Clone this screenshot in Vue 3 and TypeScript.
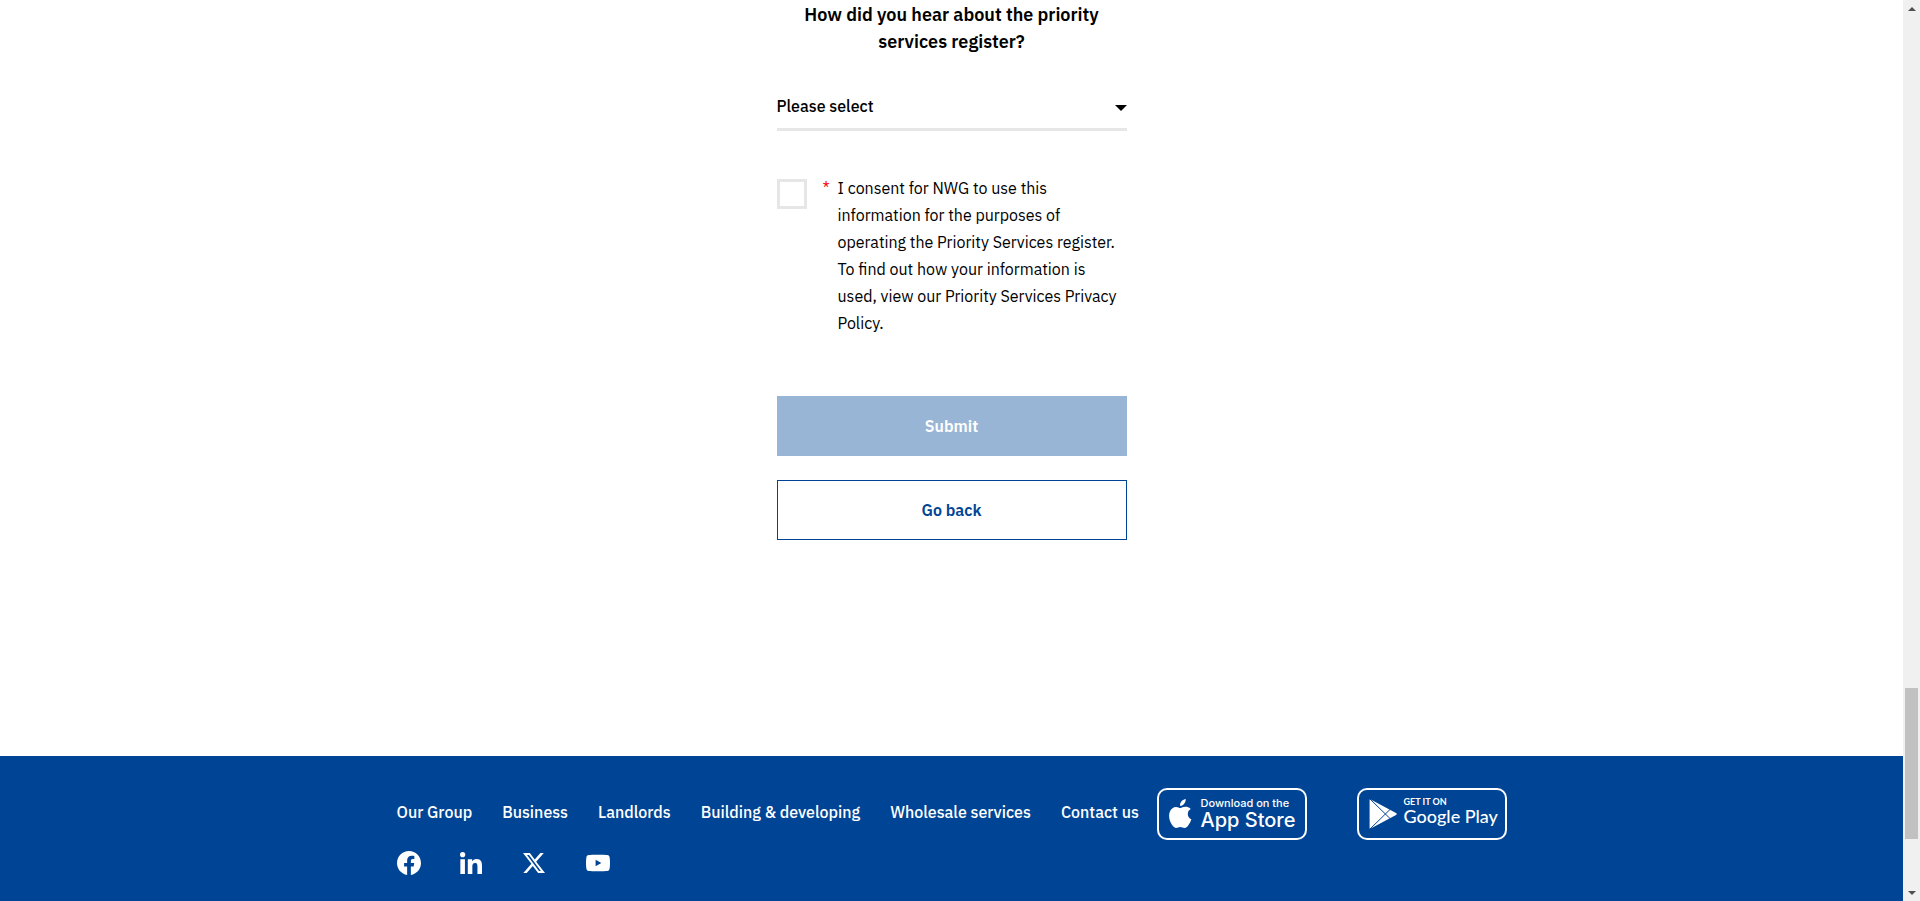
<script setup lang="ts">
import { ref } from 'vue'

interface SocialLink {
  name: string
  width: number
  height: number
  viewBox: string
  path: string
}

const source = ref<string>('')
const consent = ref<boolean>(false)

const sources: string[] = ['Website', 'Leaflet', 'Friend or family', 'Other']

const links: string[] = [
  'Our Group',
  'Business',
  'Landlords',
  'Building & developing',
  'Wholesale services',
  'Contact us',
]

const socials: SocialLink[] = [
  {
    name: 'Facebook',
    width: 24,
    height: 24,
    viewBox: '0 0 24 24',
    path: 'M24 12.07C24 5.4 18.63 0 12 0S0 5.4 0 12.07c0 6.03 4.39 11.02 10.13 11.93v-8.44H7.08v-3.49h3.05V9.41c0-3.02 1.79-4.69 4.53-4.69 1.31 0 2.68.24 2.68.24v2.97h-1.51c-1.49 0-1.96.93-1.96 1.89v2.25h3.33l-.53 3.49h-2.8V24C19.61 23.09 24 18.1 24 12.07z',
  },
  {
    name: 'LinkedIn',
    width: 22,
    height: 22,
    viewBox: '0 0 448 448',
    path: 'M100.28 448H7.4V148.9h92.88zM53.79 108.1C24.09 108.1 0 83.5 0 53.8a53.79 53.79 0 0 1 107.58 0c0 29.7-24.1 54.3-53.79 54.3zM447.9 448h-92.68V302.4c0-34.7-.7-79.2-48.29-79.2-48.29 0-55.69 37.7-55.69 76.7V448h-92.78V148.9h89.08v40.8h1.3c12.4-23.5 42.69-48.3 87.88-48.3 94 0 111.28 61.9 111.28 142.3V448z',
  },
  {
    name: 'X',
    width: 22,
    height: 20,
    viewBox: '0 0 22 20',
    path: 'M0 0h6.9l4.8 6.400L17.400 0h3.400l-7.600 8.700L22 20h-6.900l-5.300-6.900L3.700 20H.3l8.100-9.300zM4 1.900l12 16.200h1.900L6 1.900z',
  },
  {
    name: 'YouTube',
    width: 26,
    height: 18,
    viewBox: '0 0 26 18',
    path: 'M13 0C8 0 4.5.1 3 .3 1.400.6.6 1.500.4 3 .1 4.500 0 6.500 0 9s.1 4.500.4 6c.2 1.500 1 2.400 2.600 2.700 1.500.2 5 .3 10 .3s8.500-.1 10-.3c1.600-.3 2.400-1.200 2.600-2.700.3-1.500.4-3.500.4-6s-.1-4.500-.4-6C25.400 1.500 24.600.6 23 .3 21.500.1 18 0 13 0zM10.400 5.500 16.600 9l-6.200 3.500z',
  },
]
</script>

<template>
  <div class="window">
    <div class="page">
      <main class="content">
        <form class="form" @submit.prevent>
          <label class="question" for="source">How did you hear about the priority services register?</label>
          <div class="select-box">
            <select id="source" v-model="source" class="select">
              <option value="">Please select</option>
              <option v-for="item in sources" :key="item" :value="item">{{ item }}</option>
            </select>
          </div>
          <div class="consent">
            <input id="consent" v-model="consent" class="checkbox" type="checkbox" />
            <label class="consent-label" for="consent">
              <span class="required">*</span>
              <span>I consent for NWG to use this information for the purposes of operating the Priority Services register. To find out how your information is used, view our Priority Services Privacy Policy.</span>
            </label>
          </div>
          <button class="button primary" type="submit" :disabled="!consent">Submit</button>
          <button class="button secondary" type="button">Go back</button>
        </form>
      </main>

      <footer class="footer">
        <div class="footer-inner">
          <div class="footer-nav">
            <nav class="links">
              <a v-for="link in links" :key="link" class="link" href="#">{{ link }}</a>
            </nav>
            <div class="socials">
              <a v-for="item in socials" :key="item.name" class="social" href="#" :aria-label="item.name">
                <svg :width="item.width" :height="item.height" :viewBox="item.viewBox">
                  <path :d="item.path" fill="#fff" fill-rule="evenodd" />
                </svg>
              </a>
            </div>
          </div>
          <div class="badges">
            <a class="badge" href="#" aria-label="Download on the App Store">
              <svg class="apple" width="24" height="30" viewBox="0 0 24 30">
                <path fill="#fff" d="M16.700 0c.2 2-.6 3.700-1.700 4.900-1.100 1.300-2.600 2-4 1.900-.2-1.800.7-3.500 1.700-4.700C13.800.9 15.500.1 16.700 0zM21.700 10c-1.900 1.200-2.900 2.800-2.900 4.900 0 2.500 1.400 4.400 3.600 5.300-.6 1.900-1.600 3.900-2.900 5.700-1.100 1.600-2.200 3-4 3-1.700 0-2.300-1-4.200-1s-2.600 1-4.200 1c-1.800.1-3.100-1.600-4.300-3.300C.4 22.200-.9 16.500 1 12.300c1.200-2.700 3.500-4.400 6-4.400 1.900 0 3.300 1.100 4.500 1.100 1.100 0 2.900-1.300 5.200-1.200 1 0 3.500.3 5 2.200z" />
              </svg>
              <span class="badge-text apple-text">
                <span class="small">Download on the</span>
                <span class="large">App Store</span>
              </span>
            </a>
            <a class="badge" href="#" aria-label="Get it on Google Play">
              <svg class="play" width="28" height="30" viewBox="0 0 28 30">
                <path fill="#fff" d="M.6.500Q1.300.100 2.200.700L27 14Q28.500 15 27 16L2.200 29.300Q1.300 29.900.6 29.500z" />
                <path fill="none" stroke="#004595" stroke-width="1" d="M1 0 21 19.500M1 30 21 10.500" />
              </svg>
              <span class="badge-text google-text">
                <span class="small">GET IT ON</span>
                <span class="large">Google Play</span>
              </span>
            </a>
          </div>
        </div>
      </footer>
    </div>

    <div class="scrollbar" aria-hidden="true">
      <span class="arrow up"></span>
      <span class="thumb"></span>
      <span class="arrow down"></span>
    </div>
  </div>
</template>

<style>
body {
  margin: 0;
  background: #fff;
}
</style>

<style scoped>
.window {
  display: flex;
  min-height: 100vh;
  font-family: 'IBM Plex Sans', Roboto, sans-serif;
  font-size: 16px;
  line-height: 27px;
  color: #000;
}

.page {
  display: flex;
  flex: 1;
  flex-direction: column;
  min-width: 0;
}

.content {
  flex: 1;
  padding: 0 16px 216px;
}

.form {
  display: flex;
  flex-direction: column;
  max-width: 350px;
  margin: 0 auto;
}

.question {
  padding: 1px 24px 36px;
  font-size: 18px;
  font-weight: 600;
  text-align: center;
}

.select-box {
  position: relative;
  margin-bottom: 44px;
}

.select-box::after {
  position: absolute;
  top: 14px;
  right: 0;
  border: 6px solid transparent;
  border-top-color: #000;
  border-bottom: 0;
  content: '';
  pointer-events: none;
}

.select {
  box-sizing: border-box;
  width: 100%;
  height: 40px;
  padding: 0 24px 6px 0;
  border: 0;
  border-bottom: 3px solid #e6e6e6;
  border-radius: 0;
  appearance: none;
  background: transparent;
  color: #000;
  font: inherit;
  font-weight: 500;
}

.consent {
  display: flex;
  gap: 16px;
  margin-bottom: 59px;
}

.checkbox {
  box-sizing: border-box;
  flex: none;
  width: 30px;
  height: 30px;
  margin: 4px 0 0;
  border: 3px solid #e6e6e6;
  appearance: none;
  background: #fff;
}

.checkbox:checked {
  background: #004595;
}

.consent-label {
  display: grid;
  grid-template-columns: 15px 1fr;
}

.required {
  color: #f00;
}

.button {
  height: 60px;
  border: 1px solid #004595;
  border-radius: 0;
  background: #fff;
  color: #004595;
  font: inherit;
  font-weight: 600;
}

.primary {
  margin-bottom: 24px;
  background: #004595;
  color: #fff;
}

.primary:disabled {
  border-color: #99b5d5;
  background: #99b5d5;
}

.footer {
  padding: 32px 16px 18px;
  background: #004595;
}

.footer-inner {
  display: flex;
  justify-content: space-between;
  max-width: 1110px;
  margin: 0 auto;
}

.links {
  display: flex;
  gap: 30px;
  padding: 11px 0;
}

.link {
  color: #fff;
  font-weight: 500;
  text-decoration: none;
  white-space: nowrap;
}

.socials {
  display: grid;
  grid-template-columns: repeat(4, 24px);
  gap: 39px;
  align-items: center;
  height: 40px;
  padding-top: 6px;
}

.social {
  display: flex;
}

.badges {
  display: flex;
  gap: 50px;
}

.badge {
  display: flex;
  box-sizing: border-box;
  align-items: center;
  width: 150px;
  height: 52px;
  padding-left: 10px;
  border: 2px solid #fff;
  border-radius: 10px;
  color: #fff;
  text-decoration: none;
  white-space: nowrap;
}

.badge svg {
  flex: none;
}

.badge-text {
  display: flex;
  flex-direction: column;
}

.apple-text {
  margin-left: 8px;
  font-family: Inter, sans-serif;
}

.google-text {
  margin-left: 7px;
  padding-bottom: 6px;
  font-family: Lato, sans-serif;
}

.small {
  font-size: 11px;
  font-weight: 500;
  line-height: 12px;
}

.large {
  font-size: 20px;
  font-weight: 500;
  line-height: 22px;
}

.google-text .small {
  font-size: 9px;
  font-weight: 700;
  line-height: 10px;
}

.google-text .large {
  font-size: 18px;
  line-height: 18px;
}

.scrollbar {
  display: grid;
  grid-template-rows: 17px 671fr 151fr 45fr 17px;
  justify-items: center;
  width: 17px;
  background: #f0f0f0;
}

.thumb {
  grid-row: 3;
  width: 13px;
  background: #c1c1c1;
}

.arrow {
  align-self: center;
  border: 4px solid transparent;
}

.up {
  grid-row: 1;
  border-top: 0;
  border-bottom-color: #505050;
}

.down {
  grid-row: 5;
  border-top-color: #505050;
  border-bottom: 0;
}
</style>
